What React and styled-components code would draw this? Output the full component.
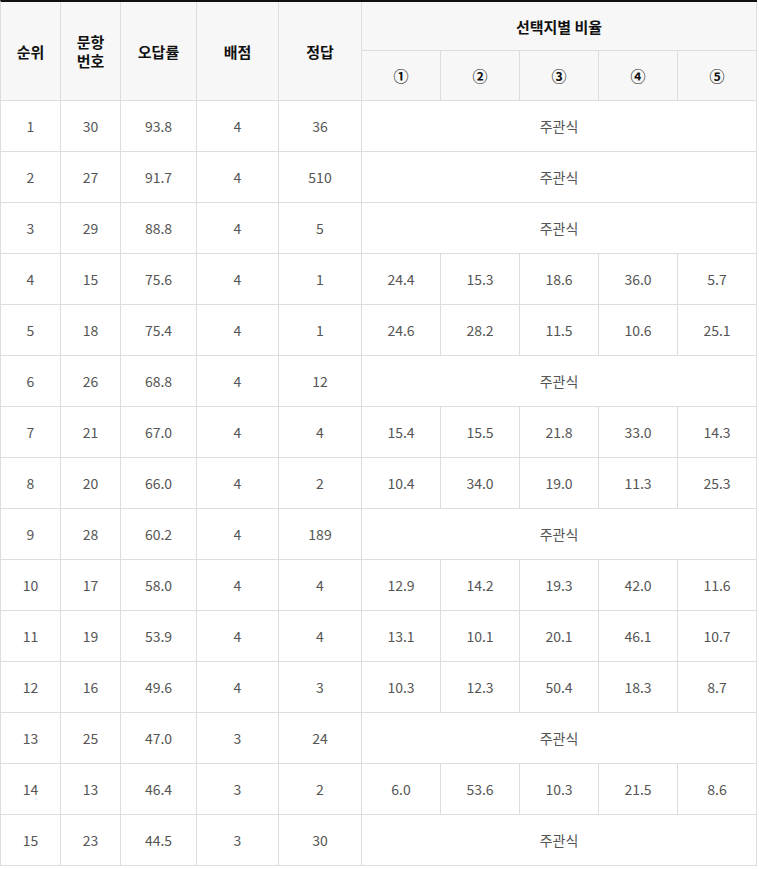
import React from "react";
import styled, { createGlobalStyle } from "styled-components";

const GlobalStyle = createGlobalStyle`
  body {
    margin: 0;
    background: #ffffff;
    font-family: "Noto Sans CJK KR", "Noto Sans", sans-serif;
  }
`;

const Table = styled.table`
  width: 757px;
  table-layout: fixed;
  border-collapse: separate;
  border-spacing: 0;
  border-top: 2px solid #111111;
  border-left: 1px solid #dddddd;
`;

const Th = styled.th`
  height: ${(p) => p.h}px;
  padding: 0;
  background-color: #f7f7f7;
  border-right: 1px solid #dddddd;
  border-bottom: 1px solid #dddddd;
  color: #111111;
  font-size: 15px;
  font-weight: 700;
  line-height: 19px;
  text-align: center;
  vertical-align: middle;
`;

const Td = styled.td`
  height: 50px;
  padding: 0;
  border-right: 1px solid #dddddd;
  border-bottom: 1px solid #dddddd;
  color: #555555;
  font-size: 14px;
  text-align: center;
  vertical-align: middle;
`;

const rows = [
  [1, 30, "93.8", 4, 36, null],
  [2, 27, "91.7", 4, 510, null],
  [3, 29, "88.8", 4, 5, null],
  [4, 15, "75.6", 4, 1, ["24.4", "15.3", "18.6", "36.0", "5.7"]],
  [5, 18, "75.4", 4, 1, ["24.6", "28.2", "11.5", "10.6", "25.1"]],
  [6, 26, "68.8", 4, 12, null],
  [7, 21, "67.0", 4, 4, ["15.4", "15.5", "21.8", "33.0", "14.3"]],
  [8, 20, "66.0", 4, 2, ["10.4", "34.0", "19.0", "11.3", "25.3"]],
  [9, 28, "60.2", 4, 189, null],
  [10, 17, "58.0", 4, 4, ["12.9", "14.2", "19.3", "42.0", "11.6"]],
  [11, 19, "53.9", 4, 4, ["13.1", "10.1", "20.1", "46.1", "10.7"]],
  [12, 16, "49.6", 4, 3, ["10.3", "12.3", "50.4", "18.3", "8.7"]],
  [13, 25, "47.0", 3, 24, null],
  [14, 13, "46.4", 3, 2, ["6.0", "53.6", "10.3", "21.5", "8.6"]],
  [15, 23, "44.5", 3, 30, null],
];

const widths = [60, 60, 76, 82, 83, 79, 79, 79, 79, 79];

const App = () => {
  return (
    <>
      <GlobalStyle />
      <Table>
        <colgroup>
          {widths.map((w, i) => (
            <col key={i} style={{ width: w }} />
          ))}
        </colgroup>
        <thead>
          <tr>
            <Th rowSpan={2}>순위</Th>
            <Th rowSpan={2}>
              문항
              <br />
              번호
            </Th>
            <Th rowSpan={2}>오답률</Th>
            <Th rowSpan={2}>배점</Th>
            <Th rowSpan={2}>정답</Th>
            <Th colSpan={5} h={48}>
              선택지별 비율
            </Th>
          </tr>
          <tr>
            {["①", "②", "③", "④", "⑤"].map((c) => (
              <Th key={c} h={49}>
                {c}
              </Th>
            ))}
          </tr>
        </thead>
        <tbody>
          {rows.map(([rank, num, rate, score, answer, ratio]) => (
            <tr key={rank}>
              <Td>{rank}</Td>
              <Td>{num}</Td>
              <Td>{rate}</Td>
              <Td>{score}</Td>
              <Td>{answer}</Td>
              {ratio ? (
                ratio.map((v, i) => <Td key={i}>{v}</Td>)
              ) : (
                <Td colSpan={5}>주관식</Td>
              )}
            </tr>
          ))}
        </tbody>
      </Table>
    </>
  );
};

export default App;
